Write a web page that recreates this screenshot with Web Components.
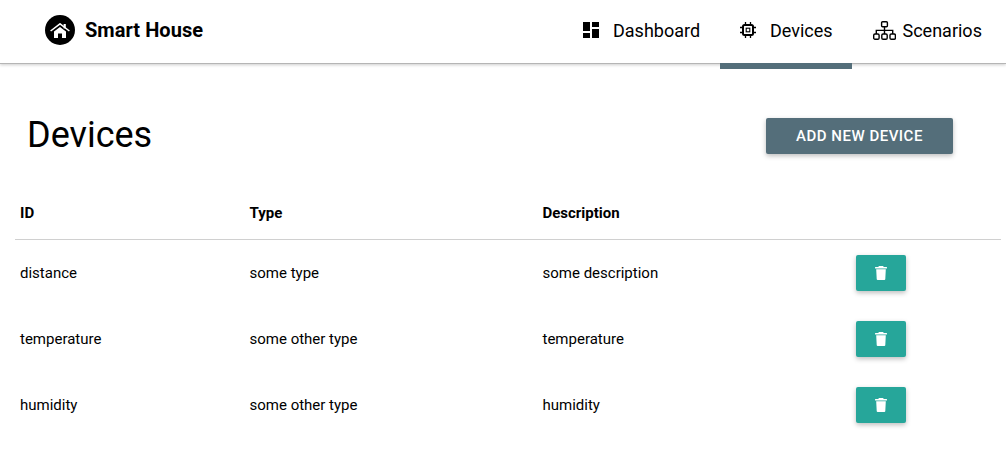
<!DOCTYPE html>
<html lang="en"><head><meta charset="utf-8"><title>Smart House</title>
<style>
html,body{margin:0;padding:0;background:#fff}
body{font-family:Roboto,"Liberation Sans",sans-serif;color:#000;width:1006px;height:462px;overflow:hidden}
</style></head><body>
<sh-app>
  <sh-header>
    <sh-nav-item slot="nav" icon="dashboard" style="--w:137px;--gap:14px;--pad:0px">Dashboard</sh-nav-item>
    <sh-nav-item slot="nav" icon="chip" active style="--w:132px;--gap:14px;--pad:20px">Devices</sh-nav-item>
    <sh-nav-item slot="nav" icon="tree" style="--w:132px;--gap:6.5px;--pad:21px">Scenarios</sh-nav-item>
  </sh-header>
  <sh-title-bar><span>Devices</span><sh-button slot="action">ADD NEW DEVICE</sh-button></sh-title-bar>
  <sh-table>
    <sh-row head><span>ID</span><span>Type</span><span>Description</span></sh-row>
    <sh-row><span>distance</span><span>some type</span><span>some description</span><sh-delete slot="action"></sh-delete></sh-row>
    <sh-row><span>temperature</span><span>some other type</span><span>temperature</span><sh-delete slot="action"></sh-delete></sh-row>
    <sh-row><span>humidity</span><span>some other type</span><span>humidity</span><sh-delete slot="action"></sh-delete></sh-row>
  </sh-table>
</sh-app>
<script>
const ICONS={
dashboard:'<svg width="16" height="16" viewBox="0 0 16 16" fill="#000"><rect x="0" y="0" width="7" height="9"/><rect x="9" y="0" width="7" height="5"/><rect x="9" y="7" width="7" height="9"/><rect x="0" y="11" width="7" height="5"/></svg>',
chip:'<svg width="16" height="16" viewBox="0 0 16 16" fill="none" stroke="#000"><rect x="3" y="3" width="10" height="10" rx="1.5" stroke-width="2"/><rect x="6.2" y="6.2" width="3.6" height="3.6" stroke-width="1.1"/><path d="M5.5 0v3M10.5 0v3M5.5 13V16M10.5 13V16M0 5.5h3M0 10.5h3M13 5.5H16M13 10.5H16" stroke-width="1.3"/></svg>',
tree:'<svg width="23" height="19" viewBox="0 0 23 19" fill="none" stroke="#000" stroke-width="1.4"><rect x="8.6" y=".7" width="5.8" height="5" rx="1"/><rect x=".7" y="13" width="5.4" height="5.2" rx="1.3"/><rect x="8.8" y="13" width="5.4" height="5.2" rx="1.3"/><rect x="17" y="13" width="5.4" height="5.2" rx="1.3"/><path d="M11.5 5.7V13M3.3 13V9.4H19.7V13"/></svg>'
};
function def(name,css,html,init){
  customElements.define(name,class extends HTMLElement{
    constructor(){super();const r=this.attachShadow({mode:'open'});r.innerHTML='<style>'+css+'</style>'+html;}
    connectedCallback(){if(init)init(this);}
  });
}
def('sh-app',':host{display:flex;flex-direction:column}','<slot></slot>');
def('sh-header',`:host{display:flex;align-items:center;justify-content:space-between;height:60px;padding-bottom:3px;border-bottom:1px solid #b5b5b5;box-shadow:0 1px 3px rgba(0,0,0,.2);padding-left:45px;background:#fff}
.brand{display:flex;align-items:center;gap:10px;font-size:20px;font-weight:700;letter-spacing:.05px}
.logo{width:30px;height:30px;border-radius:50%;background:#000;display:flex;align-items:center;justify-content:center}
nav{display:flex;height:100%;margin-right:22px}`,
`<div class="brand"><span class="logo"><svg width="20" height="15" viewBox="0 0 20 15" fill="#fff"><rect x="13.6" y="1" width="2.2" height="4.4"/><path d="M.6 8 10 .8 19.4 8" fill="none" stroke="#fff" stroke-width="1.5"/><path d="M4 8.6 10 3.9l6 4.7V15h-4v-4.5H8V15H4z"/></svg></span><span>Smart House</span></div><nav><slot name="nav"></slot></nav>`);
def('sh-nav-item',`:host{display:flex;align-items:center;position:relative;width:var(--w);box-sizing:border-box;padding-left:var(--pad);gap:var(--gap);font-size:18px;white-space:nowrap}
:host([active])::after{content:"";position:absolute;left:0;right:0;top:63px;height:6px;background:#546e7a}
.i{display:flex}`,
`<span class="i"></span><slot></slot>`,el=>{el.shadowRoot.querySelector('.i').innerHTML=ICONS[el.getAttribute('icon')];});
def('sh-title-bar',`:host{display:flex;align-items:center;justify-content:space-between;height:71px;margin-top:36px;padding:0 53px 2px 27px;font-size:36px;box-sizing:border-box}`,
`<slot></slot><slot name="action"></slot>`);
def('sh-button',`:host{display:flex;align-items:center;justify-content:center;width:187px;height:36px;margin-top:2px;background:#546e7a;color:#fff;font-size:15px;font-weight:500;letter-spacing:.5px;border-radius:2px;box-shadow:0 2px 5px rgba(0,0,0,.26)}`,'<slot></slot>');
def('sh-table',`:host{display:block;margin:0 5px 0 15px;padding-top:12px}`,'<slot></slot>');
def('sh-row',`:host{display:grid;grid-template-columns:229.5px 293px 313.5px 1fr;align-items:center;height:66px;padding-left:5px;font-size:15px}
:host([head]){height:53px;padding-top:3px;font-weight:700;border-bottom:1px solid #d0d0d0}`,
`<slot></slot><slot name="action"></slot>`);
def('sh-delete',`:host{display:flex;align-items:center;justify-content:center;width:50px;height:36px;background:#26a69a;border-radius:2px;box-shadow:0 2px 5px rgba(0,0,0,.26)}`,
`<svg width="12" height="14" viewBox="0 0 12 14" fill="#fff"><rect x="0" y="1" width="12" height="1.4" rx=".5"/><rect x="3.5" y="0" width="5" height="1.6" rx=".5"/><path d="M1.2 3.3h9.6l-.5 9.7a1 1 0 0 1-1 1H2.7a1 1 0 0 1-1-1z"/></svg>`);
</script></body></html>
